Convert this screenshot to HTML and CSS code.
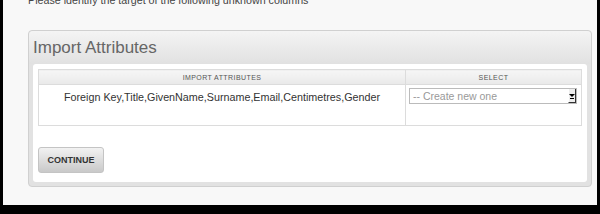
FILE: index.html
```html
<!DOCTYPE html>
<html lang="en">
<head>
  <meta charset="UTF-8" />
  <title>Import Attributes</title>
  <link rel="stylesheet" href="styles.css">
</head>
<body>
  <main class="page">
    <p class="intro">Please identify the target of the following unknown columns</p>

    <section class="panel">
      <header class="panel-head">
        <h2 class="panel-title">Import Attributes</h2>
      </header>
      <div class="panel-body">
        <table class="attr-table">
          <thead>
            <tr>
              <th class="col-attrs">Import Attributes</th>
              <th class="col-select">Select</th>
            </tr>
          </thead>
          <tbody>
            <tr>
              <td class="attrs">Foreign Key,Title,GivenName,Surname,Email,Centimetres,Gender</td>
              <td class="pick">
                <div class="fake-select">
                  <span class="fake-select-text">-- Create new one</span>
                  <span class="fake-select-btn"><span class="tri"></span></span>
                </div>
              </td>
            </tr>
          </tbody>
        </table>
        <button class="btn" type="button">Continue</button>
      </div>
    </section>
  </main>
</body>
</html>
```

FILE: styles.css
```css
* { box-sizing: border-box; }

body {
  margin: 0;
  background: #000;
  font-family: "Liberation Sans", Arial, Helvetica, sans-serif;
}

.page {
  height: 205px;
  margin: 0 3px 0 3px;
  padding: 0 5px 0 25px;
  background: #f8f8f8;
  overflow: hidden;
}

/* the line above is cut by the top edge of the shot */
.intro {
  margin: -7px 0 0;
  height: 37px;
  font-size: 10.7px;
  line-height: 14px;
  color: #444;
}

.panel {
  border: 1px solid #d0d0d0;
  border-radius: 4px;
  background: #e2e2e2;
  padding: 0 4px 4px;
}

.panel-head {
  height: 33px;
  margin: 0 -4px;
  padding: 0 4px;
  border-radius: 4px 4px 0 0;
  background: linear-gradient(#f4f4f4, #e1e1e1);
}

.panel-title {
  margin: 0;
  padding-top: 7px;
  font-size: 17px;
  line-height: 20px;
  font-weight: normal;
  color: #666;
}

.panel-body {
  background: #fff;
  border-radius: 3px;
  padding: 5px 5px 9px;
}

.attr-table {
  width: 100%;
  border-collapse: collapse;
  border: 1px solid #dcdcdc;
}

.attr-table th {
  height: 15px;
  padding: 0;
  background: linear-gradient(#f6f6f6, #e9e9e9);
  border-bottom: 1px solid #dcdcdc;
  font-size: 7px;
  font-weight: normal;
  letter-spacing: 0.06em;
  text-transform: uppercase;
  color: #555;
  text-align: center;
}

.attr-table .col-attrs { width: 367px; border-right: 1px solid #dcdcdc; }

.attr-table td {
  height: 41px;
  vertical-align: top;
}

.attrs {
  padding: 5px 4px 0;
  font-size: 10.75px;
  line-height: 14px;
  color: #333;
  text-align: center;
  border-right: 1px solid #dcdcdc;
}

.pick { padding: 3px 0 0 3px; }

.fake-select {
  display: flex;
  align-items: center;
  width: 168px;
  height: 16px;
  border: 1px solid #bbb;
  background: #fff;
}

.fake-select-text {
  flex: 1;
  padding-left: 3px;
  font-size: 10.5px;
  color: #999;
}

.fake-select-btn {
  display: flex;
  flex-direction: column;
  align-items: center;
  justify-content: center;
  width: 8px;
  height: 14px;
  background: #eee;
  border-right: 1px solid #333;
  border-bottom: 1px solid #333;
  border-left: 1px solid #fff;
}

.tri {
  width: 0;
  height: 0;
  border-left: 3px solid transparent;
  border-right: 3px solid transparent;
  border-top: 3px solid #000;
  box-shadow: 0 3px 0 -1px #000;
}

.btn {
  display: block;
  margin-top: 21px;
  width: 66px;
  height: 26px;
  padding: 0;
  border: 1px solid #c4c4c4;
  border-radius: 3px;
  background: linear-gradient(#f2f2f2, #c9c9c9);
  font-family: inherit;
  font-size: 9px;
  font-weight: bold;
  text-transform: uppercase;
  color: #333;
}
```
